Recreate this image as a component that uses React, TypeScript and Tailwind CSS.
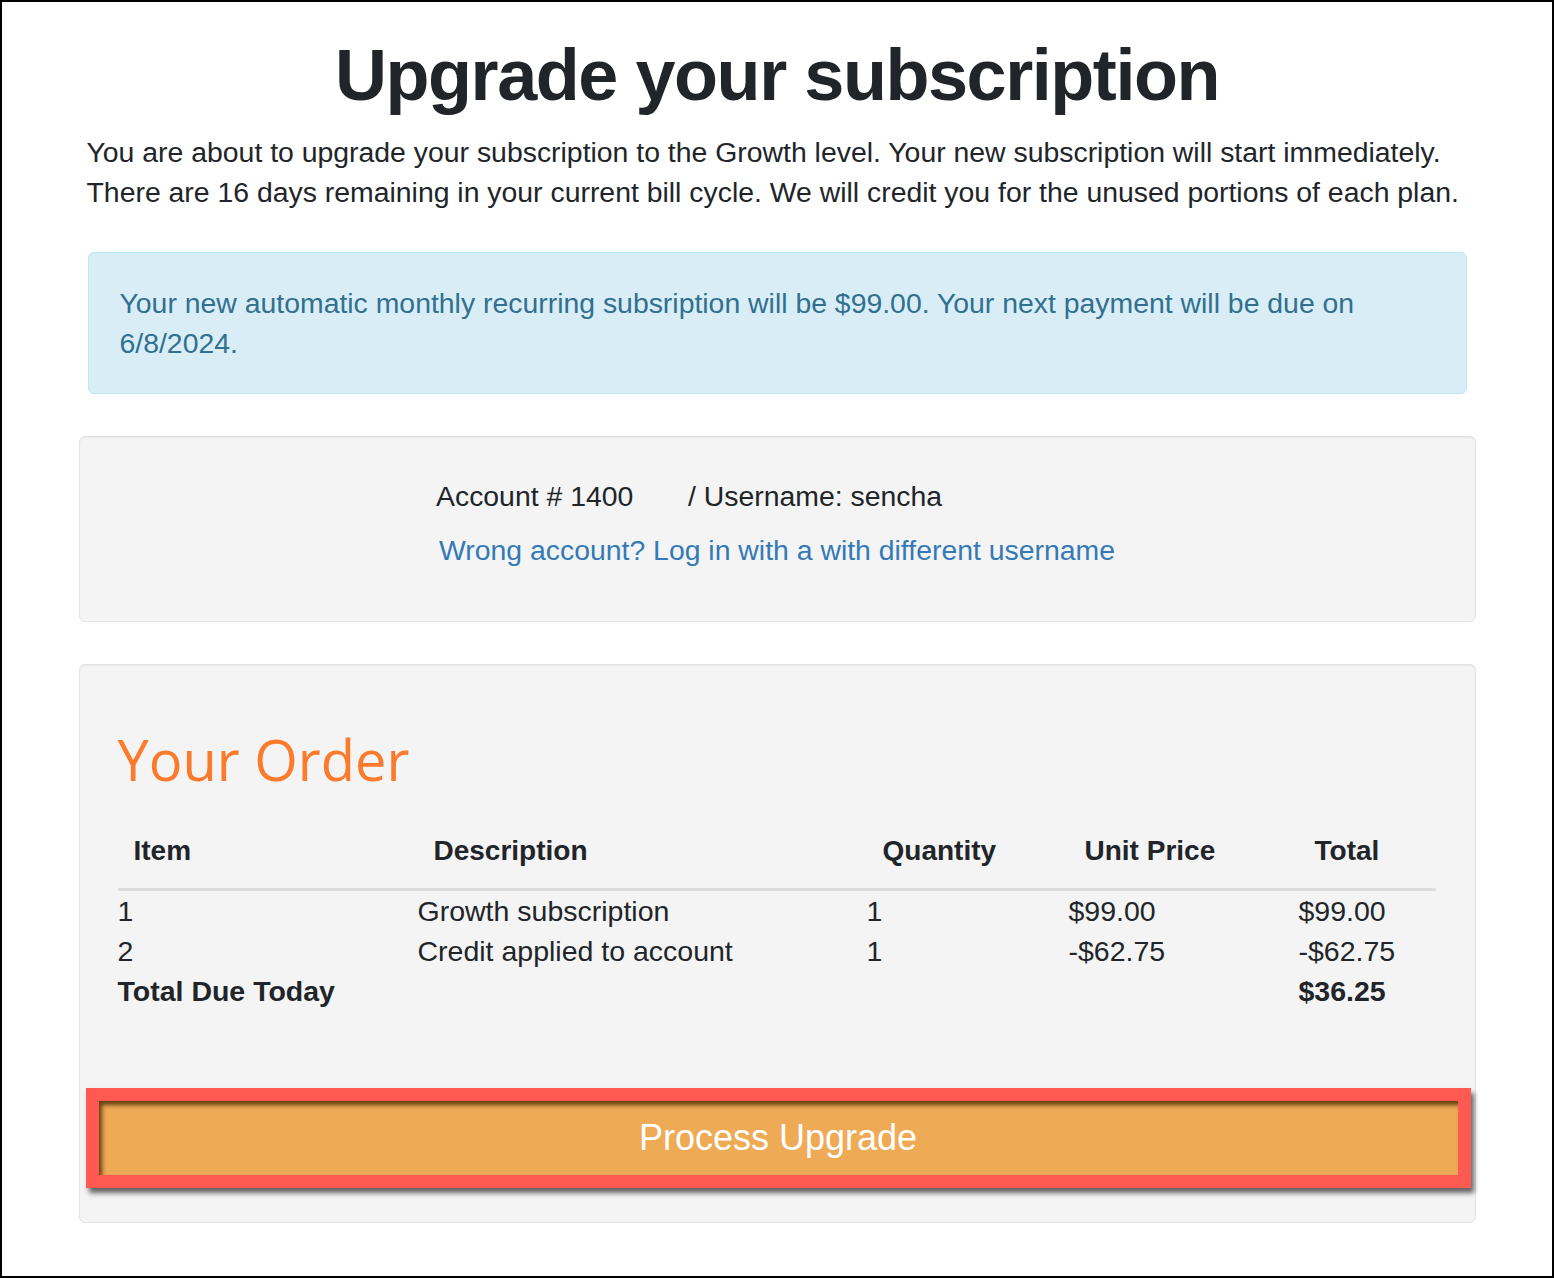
import React from 'react'

const rows = [
  { item: '1', desc: 'Growth subscription', qty: '1', unit: '$99.00', total: '$99.00' },
  { item: '2', desc: 'Credit applied to account', qty: '1', unit: '-$62.75', total: '-$62.75' },
]

export default function App() {
  return (
    <div className="w-[1554px] h-[1278px] border-2 border-black bg-white text-[#212529] font-['Liberation_Sans',Arial,sans-serif]">
      <h1 className="pt-[33px] text-center text-[72px] leading-[80px] font-bold tracking-[-0.02em]">
        Upgrade your subscription
      </h1>

      <div className="mx-auto w-[1397px]">
        <p className="mt-[17px] pl-[8px] text-[28.4px] leading-[40px]">
          You are about to upgrade your subscription to the Growth level. Your new subscription will start immediately.
          <br />
          There are 16 days remaining in your current bill cycle. We will credit you for the unused portions of each plan.
        </p>

        <div className="mt-[40px] mx-[9px] rounded-[6px] border border-[#bce8f1] bg-[#d9edf7] px-[31px] py-[30px] text-[28.4px] leading-[40px] text-[#31708f]">
          Your new automatic monthly recurring subsription will be $99.00. Your next payment will be due on
          <br />
          6/8/2024.
        </div>

        <div className="mt-[42px] rounded-[6px] border border-[#e3e3e3] bg-[#f4f4f4] pt-[39px] pb-[51px] shadow-[inset_0_1px_1px_rgba(0,0,0,0.05)] text-[28.4px] leading-[40px]">
          <div className="mx-auto w-fit">
            <div className="flex -ml-[3px]">
              <span className="w-[252px]">Account # 1400</span>
              <span>/ Username: sencha</span>
            </div>
            <a href="#" className="mt-[14px] block text-[#337ab7]">
              Wrong account? Log in with a with different username
            </a>
          </div>
        </div>

        <div className="mt-[42px] rounded-[6px] border border-[#e3e3e3] bg-[#f4f4f4] px-[38px] pt-[62px] pb-[34px] shadow-[inset_0_1px_1px_rgba(0,0,0,0.05)]">
          <h2 className="font-['Open_Sans',sans-serif] text-[56px] leading-[64px] text-[#fb7a2c]">Your Order</h2>

          <table className="mt-[25px] w-[1318px] table-fixed text-left text-[28px] leading-[40px]">
            <colgroup>
              <col className="w-[300px]" />
              <col className="w-[449px]" />
              <col className="w-[202px]" />
              <col className="w-[230px]" />
              <col className="w-[137px]" />
            </colgroup>
            <thead>
              <tr className="border-b-[3px] border-[#dddddd]">
                {['Item', 'Description', 'Quantity', 'Unit Price', 'Total'].map(h => (
                  <th key={h} className="pl-[16px] pt-[15px] pb-[17px] font-bold whitespace-nowrap">{h}</th>
                ))}
              </tr>
            </thead>
            <tbody className="text-[28.5px]">
              {rows.map(r => (
                <tr key={r.item}>
                  <td>{r.item}</td>
                  <td className="whitespace-nowrap">{r.desc}</td>
                  <td>{r.qty}</td>
                  <td>{r.unit}</td>
                  <td>{r.total}</td>
                </tr>
              ))}
              <tr className="font-bold">
                <td colSpan={2}>Total Due Today</td>
                <td></td>
                <td></td>
                <td>$36.25</td>
              </tr>
            </tbody>
          </table>

          <div className="mt-[77px] ml-[-32px] mr-[-34px] h-[100px] border-[13px] border-[#fe5a51] shadow-[3px_5px_5px_rgba(0,0,0,0.6)]">
            <button className="h-full w-full bg-[#eeaa55] text-[36px] text-white shadow-[inset_3px_4px_4px_rgba(70,35,0,0.8)]">
              Process Upgrade
            </button>
          </div>
        </div>
      </div>
    </div>
  )
}
